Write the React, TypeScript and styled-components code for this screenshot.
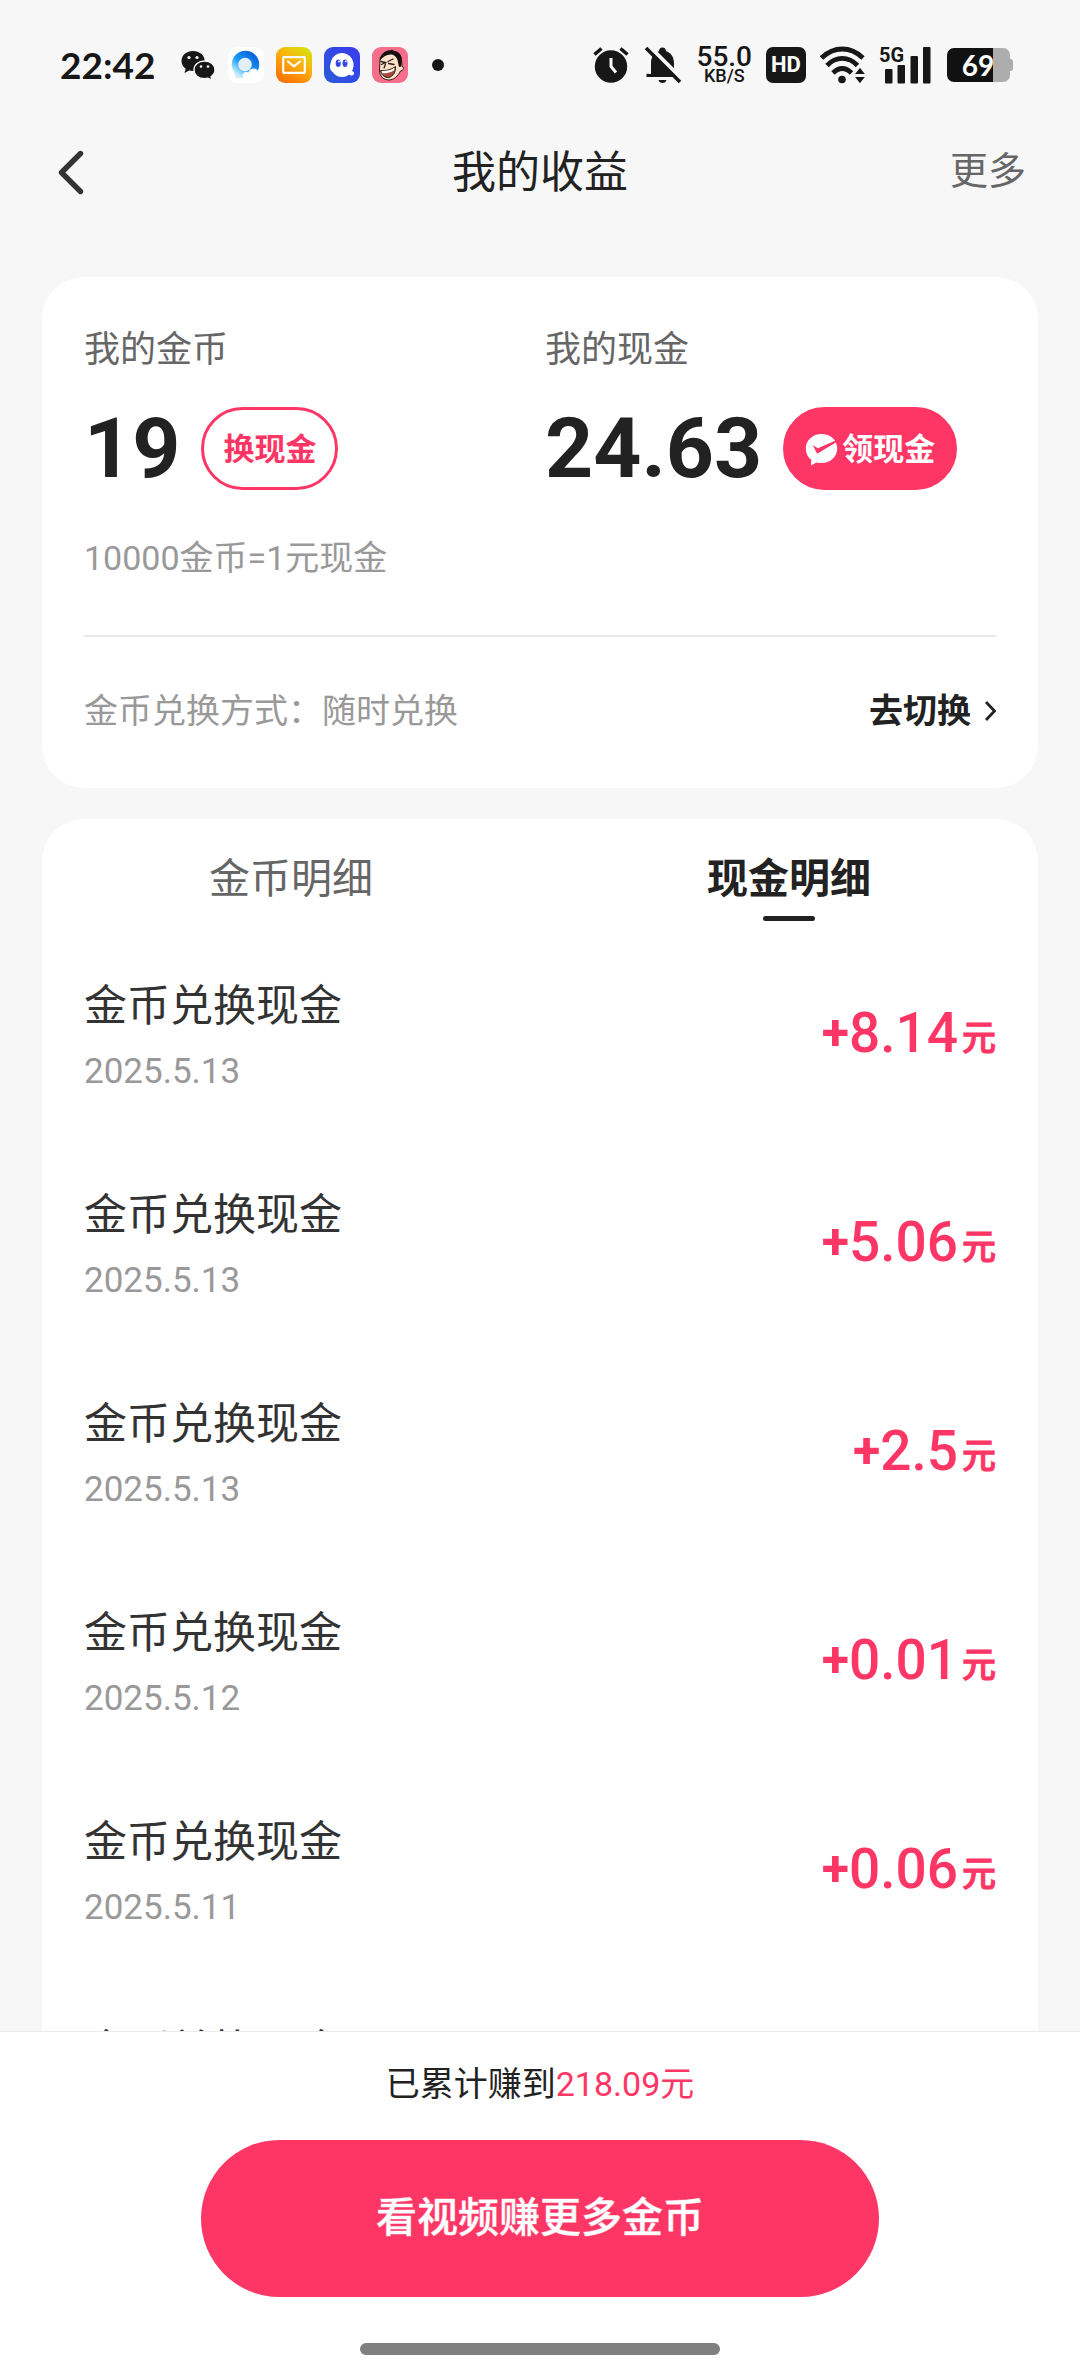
import React, { useState } from "react";
import styled, { createGlobalStyle } from "styled-components";

const color = {
  page: "#f7f7f7",
  ink: "#222222",
  status: "#171717",
  text: "#333333",
  muted: "#666666",
  faint: "#999999",
  pink: "#fe3666",
  line: "#ebebeb",
};

const GlobalStyle = createGlobalStyle`
  * { box-sizing: border-box; }
  body {
    margin: 0;
    background: ${color.page};
    color: ${color.ink};
    font-family: Roboto, "Noto Sans CJK SC", sans-serif;
  }
  h1, p, ul { margin: 0; padding: 0; }
  button { font-family: inherit; border: 0; background: none; padding: 0; cursor: pointer; }
`;

const Screen = styled.div`
  display: flex;
  flex-direction: column;
  height: 100vh;
  overflow: hidden;
`;

/* ---------- status bar ---------- */

const StatusBar = styled.div`
  display: flex;
  align-items: center;
  justify-content: space-between;
  flex: none;
  height: 120px;
  padding: 10px 67px 0 60px;
  color: ${color.status};
`;

const StatusGroup = styled.div<{ $gap: number }>`
  display: flex;
  align-items: center;
  gap: ${(p) => p.$gap}px;
`;

const Clock = styled.span`
  width: 108px;
  font: 700 37px/48px Lato, sans-serif;
`;

const Speed = styled.span`
  display: flex;
  flex-direction: column;
  align-items: center;
  font-weight: 500;
`;

const SpeedValue = styled.span`
  font-size: 28px;
  line-height: 22px;
`;

const SpeedUnit = styled.span`
  font-size: 18px;
  line-height: 16px;
`;

const HdBadge = styled.span`
  display: grid;
  place-items: center;
  width: 40px;
  height: 36px;
  border-radius: 7px;
  background: ${color.status};
  color: #fff;
  font: 700 22px/36px "Liberation Sans Narrow", Roboto, sans-serif;
`;

const Signal = styled.span`
  position: relative;
  display: block;
  width: 52px;
  height: 38px;
`;

const SignalLabel = styled.span`
  position: absolute;
  top: 0;
  left: 0;
  font: 700 20px/18px "Liberation Sans Narrow", Roboto, sans-serif;
`;

const Battery = styled.span`
  position: relative;
  display: block;
  width: 66px;
  height: 34px;
  margin-left: 2px;
`;

const BatteryLevel = styled.span`
  position: absolute;
  inset: 0;
  padding-right: 4px;
  text-align: center;
  color: #fff;
  font: 700 28px/34px Lato, sans-serif;
`;

/* ---------- header ---------- */

const Header = styled.header`
  display: grid;
  grid-template-columns: 1fr auto 1fr;
  align-items: center;
  flex: none;
  height: 106px;
  padding: 0 54px;
`;

const BackButton = styled.button`
  display: flex;
  justify-self: start;
  padding-bottom: 2px;
`;

const Title = styled.h1`
  font-size: 44px;
  line-height: 60px;
  font-weight: 400;
`;

const MoreButton = styled.button`
  justify-self: end;
  padding-bottom: 4px;
  color: ${color.muted};
  font-size: 38px;
  line-height: 60px;
`;

/* ---------- content ---------- */

const Content = styled.main`
  display: flex;
  flex-direction: column;
  gap: 31px;
  flex: 1;
  min-height: 0;
  overflow-y: auto;
  scrollbar-width: none;
  padding: 51px 42px 0;
`;

const Card = styled.section`
  flex: none;
  border-radius: 42px;
  background: #fff;
`;

const SummaryCard = styled(Card)`
  padding: 49px 42px 0;
`;

const Accounts = styled.div`
  display: grid;
  grid-template-columns: 1fr 1fr;
  column-gap: 10px;
`;

const AccountLabel = styled.p`
  color: ${color.muted};
  font-size: 36px;
  line-height: 48px;
`;

const Balance = styled.div`
  display: flex;
  align-items: center;
  gap: 21px;
  margin-top: 33px;
`;

const BalanceValue = styled.span`
  font-size: 84px;
  line-height: 83px;
  font-weight: 700;
`;

const Pill = styled.button<{ $filled?: boolean }>`
  display: flex;
  align-items: center;
  gap: 4px;
  height: 83px;
  padding: 2px 19px 0;
  border: 3px solid ${color.pink};
  border-radius: 42px;
  background: ${(p) => (p.$filled ? color.pink : "#fff")};
  color: ${(p) => (p.$filled ? "#fff" : color.pink)};
  font-size: 31px;
  line-height: 48px;
  font-weight: 700;
`;

const Rate = styled.p`
  margin-top: 44px;
  color: ${color.faint};
  font-size: 34px;
  line-height: 48px;
`;

const ExchangeRow = styled.div`
  display: flex;
  align-items: center;
  justify-content: space-between;
  height: 153px;
  margin-top: 53px;
  padding-bottom: 3px;
  border-top: 2px solid ${color.line};
  font-size: 34px;
  line-height: 48px;
`;

const ExchangeMode = styled.span`
  color: ${color.faint};
`;

const SwitchButton = styled.button`
  display: flex;
  align-items: center;
  gap: 14px;
  color: ${color.ink};
  font-size: 34px;
  line-height: 48px;
  font-weight: 700;
`;

const Tabs = styled.div`
  display: grid;
  grid-template-columns: 1fr 1fr;
`;

const Tab = styled.button<{ $active: boolean }>`
  display: flex;
  flex-direction: column;
  align-items: center;
  gap: 13px;
  padding-top: 36px;
  color: ${(p) => (p.$active ? color.ink : color.muted)};
  font-size: 41px;
  line-height: 48px;
  font-weight: ${(p) => (p.$active ? 700 : 400)};

  &::after {
    content: "";
    width: 52px;
    height: 5px;
    border-radius: 3px;
    background: ${(p) => (p.$active ? color.ink : "transparent")};
  }
`;

const Records = styled.ul`
  margin-top: 10px;
  list-style: none;
`;

const Record = styled.li`
  display: flex;
  align-items: center;
  justify-content: space-between;
  height: 209px;
  padding: 0 42px;
`;

const RecordInfo = styled.div`
  display: grid;
  row-gap: 12px;
`;

const RecordName = styled.p`
  color: ${color.text};
  font-size: 43px;
  line-height: 60px;
`;

const RecordDate = styled.time`
  color: ${color.faint};
  font-size: 35px;
  line-height: 48px;
`;

const Amount = styled.p`
  padding-bottom: 6px;
  color: ${color.pink};
  font-size: 55px;
  line-height: 60px;
  font-weight: 500;
`;

const Sign = styled.span`
  font-size: 50px;
  line-height: 1;
  font-weight: 700;
  vertical-align: 2px;
`;

const Unit = styled.span`
  margin-left: 4px;
  font-size: 34px;
  line-height: 1;
  vertical-align: 2px;
  -webkit-text-stroke: 1px currentColor;
`;

/* ---------- footer ---------- */

const Footer = styled.footer`
  display: flex;
  flex-direction: column;
  align-items: center;
  flex: none;
  padding: 28px 42px 21px;
  border-top: 1px solid ${color.line};
  background: #fff;
`;

const Total = styled.p`
  font-size: 34px;
  line-height: 48px;
`;

const TotalValue = styled.span`
  color: ${color.pink};
`;

const WatchButton = styled.button`
  width: 68%;
  height: 157px;
  margin-top: 32px;
  padding-bottom: 2px;
  border-radius: 79px;
  background: ${color.pink};
  color: #fff;
  font-size: 41px;
  line-height: 60px;
  font-weight: 500;
  -webkit-text-stroke: 1px rgba(255, 255, 255, 0.4);
`;

const HomeIndicator = styled.div`
  width: 360px;
  height: 12px;
  margin-top: 46px;
  border-radius: 6px;
  background: #808080;
`;

/* ---------- icons ---------- */

const WechatIcon = () => (
  <svg width="36" height="36" viewBox="0 0 36 36">
    <path d="M13 4C6.400 4 1.500 8.300 1.500 14c0 3.200 1.700 6 4.200 7.800L4.500 26l4.700-2.500c1.200.3 2.500.5 3.800.5 6.600 0 11.700-4.300 11.700-10S19.600 4 13 4z" fill={color.status} />
    <path d="M24.500 14c-6 0-10.500 3.900-10.500 9s4.500 8.800 10.500 8.800c1.200 0 2.400-.2 3.500-.5l4 2.100-1-3.600c2.300-1.600 4-4 4-6.800 0-5.100-4.500-9-10.500-9z" fill={color.status} stroke={color.page} strokeWidth="1.400" />
    <g fill={color.page}>
      <circle cx="9" cy="10.500" r="1.600" />
      <circle cx="17" cy="10.500" r="1.600" />
      <circle cx="21" cy="19.500" r="1.300" />
      <circle cx="28" cy="19.500" r="1.300" />
    </g>
  </svg>
);

const BrowserIcon = () => (
  <svg width="36" height="36" viewBox="0 0 36 36">
    <defs>
      <linearGradient id="browserRing" x1="0.900" y1="0.200" x2="0.300" y2="0.950">
        <stop offset="0" stopColor="#0a62dc" />
        <stop offset="0.550" stopColor="#1b9cf5" />
        <stop offset="1" stopColor="#c4f1ff" />
      </linearGradient>
    </defs>
    <rect width="36" height="36" rx="9" fill="#fff" />
    <path d="M8 31h21c4 0 5-3 4-5H6z" fill="#d9e4f3" />
    <circle cx="17.500" cy="17.500" r="13.700" fill="url(#browserRing)" />
    <circle cx="17" cy="17.500" r="6.800" fill="#e3eef9" />
    <path d="M15 31c-2-4 2-7.500 5.500-5.500 1-5 8-5.500 9.500-1 4 .5 4.500 6.500 0 6.500z" fill="#fff" />
  </svg>
);

const MailIcon = () => (
  <svg width="36" height="36" viewBox="0 0 36 36">
    <defs>
      <linearGradient id="mailBase" x1="0.900" y1="0" x2="0.300" y2="1">
        <stop offset="0" stopColor="#d3e60e" />
        <stop offset="0.450" stopColor="#fbb20d" />
        <stop offset="1" stopColor="#fb7408" />
      </linearGradient>
    </defs>
    <rect width="36" height="36" rx="9" fill="url(#mailBase)" />
    <rect x="7.200" y="10.200" width="21.600" height="15.600" rx="0.800" fill="none" stroke="#fff" strokeWidth="2.200" />
    <path d="M12 14.500l6 4.800 6-4.800" fill="none" stroke="#fff" strokeWidth="2.200" strokeLinecap="round" strokeLinejoin="round" />
  </svg>
);

const ChatIcon = () => (
  <svg width="36" height="36" viewBox="0 0 36 36">
    <defs>
      <linearGradient id="chatBase" x1="0" y1="1" x2="1" y2="0">
        <stop offset="0" stopColor="#2a5bd8" />
        <stop offset="1" stopColor="#3a3af0" />
      </linearGradient>
    </defs>
    <rect width="36" height="36" rx="9" fill="url(#chatBase)" />
    <ellipse cx="18" cy="18" rx="11.500" ry="12" fill="#fff" />
    <path d="M7 16.500c-2 3-1 7 2 8.500zM26 23c1.500 1.500 3.500 1 4 2.500.4 1.500-.5 3-2.500 3S24 27 24 25z" fill="#fff" />
    <ellipse cx="14.200" cy="16.300" rx="2.500" ry="3.800" fill="#3048e6" />
    <ellipse cx="21" cy="16.300" rx="2.500" ry="3.800" fill="#3048e6" />
    <circle cx="15" cy="14.400" r="0.900" fill="#fff" />
    <circle cx="21.800" cy="14.400" r="0.900" fill="#fff" />
  </svg>
);

const FaceIcon = () => (
  <svg width="36" height="36" viewBox="0 0 36 36">
    <rect width="36" height="36" rx="9" fill="#f56e8b" />
    <path d="M8 13C10 5 17 2.500 22 4.500c5 1 7 4 7.500 8l.5 7c2.500.5 2 4-1.500 4.500C26 29 22 33 17 33c-5.500 0-9-3.500-9.500-9z" fill="#fbe3cb" stroke="#2b1a16" strokeWidth="1" />
    <path d="M7.500 13.500C8 7 14 3 18 3.500c1-1 3-1 3.500.3C27 4.500 30 8 29.500 13l-.3 6.500-2.200.5-1.500-7c-1-3.500-4-5.500-7-5.500-4 0-7 2-11 6z" fill="#17100f" />
    <path d="M9 14.500l4.500 1-4 2M16 14.500l5-2.500M16.500 16.500l5.500 1M13.500 17l-1.500 4" fill="none" stroke="#2b1a16" strokeWidth="1.300" strokeLinecap="round" />
    <path d="M8.500 23.500c5 .5 10-.5 15-4 .5 5-2.500 10.500-7 11-4 .3-7-2.500-8-7z" fill="#a8483f" stroke="#2b1a16" strokeWidth="1" />
    <path d="M9.500 24c5 .3 9-.8 13-3.200l-.3 2.400c-4 2.500-8 3.300-12.200 3z" fill="#fff" />
  </svg>
);

const DotIcon = () => (
  <svg width="36" height="36" viewBox="0 0 36 36">
    <circle cx="18" cy="18" r="6" fill={color.status} />
  </svg>
);

const AlarmIcon = () => (
  <svg width="38" height="38" viewBox="0 0 38 38">
    <circle cx="19" cy="20.500" r="16.200" fill={color.status} />
    <path d="M2.500 8.500l7-6M35.500 8.500l-7-6" stroke={color.status} strokeWidth="3.600" />
    <path d="M19 12v8.500l5 6" fill="none" stroke={color.page} strokeWidth="3" />
  </svg>
);

const BellOffIcon = () => (
  <svg width="38" height="38" viewBox="0 0 38 38">
    <path d="M7 28c0 0 0-4 0-11C7 10.500 10.500 6.500 15 5.200 15 3 16.300 1.500 18.500 1.500S22 3 22 5.200c4.500 1.300 8 5.300 8 11.800v6l4 4v4H2.500v-3.200z" fill={color.status} />
    <path d="M14.500 34h8c-.5 2-2 3-4 3s-3.500-1-4-3z" fill={color.status} />
    <path d="M3.500 -1.500L39 34" stroke={color.page} strokeWidth="4" />
    <path d="M2 2l34 34" stroke={color.status} strokeWidth="3.600" />
  </svg>
);

const WifiIcon = () => (
  <svg width="45" height="38" viewBox="0 0 45 38">
    <g fill="none" stroke={color.status} strokeWidth="4.800">
      <path d="M1.500 12C14 0 30.500 0 43 12" />
      <path d="M7 19.500c9-9.500 21.500-9.500 30.500 0" />
      <path d="M13 27c6-6 12.500-6 18.500 0" />
    </g>
    <circle cx="22" cy="33.500" r="3.800" fill={color.status} />
    <path d="M40 21l6 7.500H34zM34 30.500h12L40 38z" fill={color.status} stroke={color.page} strokeWidth="1.200" />
  </svg>
);

const SignalBars = () => (
  <svg width="52" height="38" viewBox="0 0 52 38" fill={color.status}>
    <rect x="6" y="23" width="7.500" height="14.500" rx="1" />
    <rect x="18.500" y="19" width="7.500" height="18.500" rx="1" />
    <rect x="31.500" y="10" width="7.500" height="27.500" rx="1" />
    <rect x="44" y="1" width="7.500" height="36.500" rx="1" />
  </svg>
);

const BatteryShape = () => (
  <svg width="66" height="34" viewBox="0 0 66 34">
    <rect x="30" width="33" height="34" rx="7" fill="#adadad" />
    <rect x="60" y="11" width="6" height="12" rx="2.500" fill="#adadad" />
    <path d="M7 0h39v34H7a7 7 0 0 1-7-7V7a7 7 0 0 1 7-7z" fill="#111111" />
  </svg>
);

const BackIcon = () => (
  <svg width="34" height="46" viewBox="0 0 34 46" fill="none">
    <path d="M26.500 4.500L7.500 23.500l19 19" stroke="#333333" strokeWidth="5.400" strokeLinecap="round" strokeLinejoin="round" />
  </svg>
);

const ForwardIcon = () => (
  <svg width="11" height="20" viewBox="0 0 11 20" fill="none">
    <path d="M1 1l8.500 9L1 19" stroke={color.ink} strokeWidth="2.800" />
  </svg>
);

const WalletIcon = () => (
  <svg width="33" height="33" viewBox="0 0 34 34">
    <path d="M17 1C8 1 .8 7.500.8 16c0 5 2.200 9 5.700 11.800L6.200 33.500l5.500-3.200c1.700.5 3.400.7 5.300.7 9 0 16.200-6.500 16.200-15 0-2.200-.5-4.300-1.400-6.200L12.500 21.300 8 12.500l5.300 3.200L31 8C28 3.700 23 1 17 1z" fill="#fff" />
  </svg>
);

/* ---------- page ---------- */

const records = [
  { date: "2025.5.13", amount: "8.14" },
  { date: "2025.5.13", amount: "5.06" },
  { date: "2025.5.13", amount: "2.5" },
  { date: "2025.5.12", amount: "0.01" },
  { date: "2025.5.11", amount: "0.06" },
  { date: "2025.5.11", amount: "0.06" },
];

const tabs = ["金币明细", "现金明细"];

export default function App() {
  const [active, setActive] = useState(1);

  return (
    <Screen>
      <GlobalStyle />
      <StatusBar>
        <StatusGroup $gap={12}>
          <Clock>22:42</Clock>
          <WechatIcon />
          <BrowserIcon />
          <MailIcon />
          <ChatIcon />
          <FaceIcon />
          <DotIcon />
        </StatusGroup>
        <StatusGroup $gap={14}>
          <AlarmIcon />
          <BellOffIcon />
          <Speed>
            <SpeedValue>55.0</SpeedValue>
            <SpeedUnit>KB/S</SpeedUnit>
          </Speed>
          <HdBadge>HD</HdBadge>
          <WifiIcon />
          <Signal>
            <SignalBars />
            <SignalLabel>5G</SignalLabel>
          </Signal>
          <Battery>
            <BatteryShape />
            <BatteryLevel>69</BatteryLevel>
          </Battery>
        </StatusGroup>
      </StatusBar>

      <Header>
        <BackButton aria-label="返回">
          <BackIcon />
        </BackButton>
        <Title>我的收益</Title>
        <MoreButton>更多</MoreButton>
      </Header>

      <Content>
        <SummaryCard>
          <Accounts>
            <div>
              <AccountLabel>我的金币</AccountLabel>
              <Balance>
                <BalanceValue>19</BalanceValue>
                <Pill>换现金</Pill>
              </Balance>
            </div>
            <div>
              <AccountLabel>我的现金</AccountLabel>
              <Balance>
                <BalanceValue>24.63</BalanceValue>
                <Pill $filled>
                  <WalletIcon />
                  领现金
                </Pill>
              </Balance>
            </div>
          </Accounts>
          <Rate>10000金币=1元现金</Rate>
          <ExchangeRow>
            <ExchangeMode>金币兑换方式：随时兑换</ExchangeMode>
            <SwitchButton>
              去切换
              <ForwardIcon />
            </SwitchButton>
          </ExchangeRow>
        </SummaryCard>

        <Card>
          <Tabs role="tablist">
            {tabs.map((name, i) => (
              <Tab key={name} role="tab" aria-selected={i === active} $active={i === active} onClick={() => setActive(i)}>
                {name}
              </Tab>
            ))}
          </Tabs>
          <Records>
            {records.map((record, i) => (
              <Record key={i}>
                <RecordInfo>
                  <RecordName>金币兑换现金</RecordName>
                  <RecordDate>{record.date}</RecordDate>
                </RecordInfo>
                <Amount>
                  <Sign>+</Sign>
                  {record.amount}
                  <Unit>元</Unit>
                </Amount>
              </Record>
            ))}
          </Records>
        </Card>
      </Content>

      <Footer>
        <Total>
          已累计赚到<TotalValue>218.09元</TotalValue>
        </Total>
        <WatchButton>看视频赚更多金币</WatchButton>
        <HomeIndicator />
      </Footer>
    </Screen>
  );
}
